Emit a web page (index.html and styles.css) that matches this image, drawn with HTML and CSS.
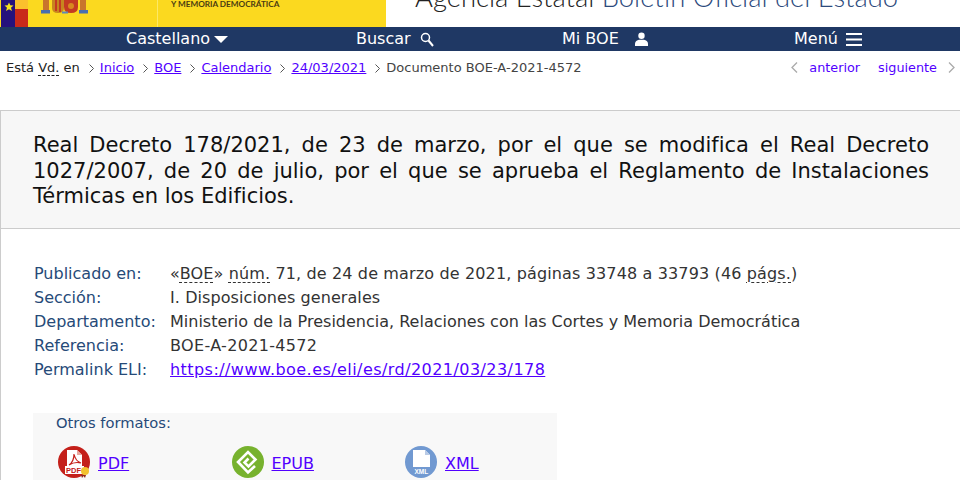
FILE: index.html
```html
<!DOCTYPE html>
<html lang="es">
<head>
<meta charset="utf-8">
<title>BOE-A-2021-4572</title>
<link rel="stylesheet" href="styles.css">
</head>
<body>
<header class="top">
  <div class="logo">
    <svg class="flag" width="90" height="27" viewBox="0 0 90 27">
      <rect x="1" width="14" height="27" fill="#26127c"/>
      <rect x="15" width="13" height="9" fill="#fbc02d"/>
      <rect x="15" y="9" width="13" height="18" fill="#c92a1a"/>
      <polygon points="9,2.500 10.300,5.300 13.500,5.500 11,7.700 12,11 9,9.200 6,11 7,7.700 4.500,5.500 7.700,5.300" fill="#f7e11e"/>
      <rect x="43" width="6" height="10" fill="#c9752c"/>
      <rect x="41" y="10" width="9" height="3.500" fill="#4a6fb0"/>
      <path d="M52 0h12v8q0 5-6 5t-6-5z" fill="#c7861f"/>
      <path d="M55 0h2v11h-2zM59 0h2v12h-2z" fill="#c43a22"/>
      <path d="M64 0h14v7q0 6-7 6t-7-6z" fill="#c43a22"/>
      <circle cx="71" cy="6" r="3" fill="#d8891f"/>
      <rect x="62" y="11.500" width="6" height="2" fill="#5f86b8"/>
      <rect x="80" width="6" height="10" fill="#c9752c"/>
      <rect x="79" y="10" width="9" height="3.500" fill="#4a6fb0"/>
    </svg>
    <span class="ministry">Y MEMORIA DEMOCRÁTICA</span>
  </div>
  <div class="agency">Agencia Estatal <span class="boe-name">Boletín Oficial del Estado</span></div>
</header>
<nav class="mainnav">
  <a class="nav-item nav-lang">Castellano <svg width="14" height="7" viewBox="0 0 14 7"><polygon points="0,0 14,0 7,7" fill="#fff"/></svg></a>
  <a class="nav-item nav-search">Buscar <svg width="14" height="15" viewBox="0 0 14 15"><circle cx="5.500" cy="5.500" r="4" fill="none" stroke="#fff" stroke-width="1.500"/><line x1="8.500" y1="8.500" x2="13" y2="14" stroke="#fff" stroke-width="2"/></svg></a>
  <a class="nav-item nav-mi">Mi BOE <svg width="13" height="14" viewBox="0 0 13 14"><circle cx="6.500" cy="3.700" r="3.200" fill="#fff"/><path d="M0 14v-2.500c0-2 2-3.500 4-3.800h5c2 .3 4 1.800 4 3.800V14z" fill="#fff"/></svg></a>
  <a class="nav-item nav-menu">Menú <svg width="16" height="13" viewBox="0 0 16 13"><rect width="16" height="2" fill="#fff"/><rect y="5.500" width="16" height="2" fill="#fff"/><rect y="11" width="16" height="2" fill="#fff"/></svg></a>
</nav>
<div class="crumbs">
  <div class="trail">
    <span class="here">Está <abbr>Vd.</abbr> en</span>
    <svg class="sep" width="5" height="9" viewBox="0 0 5 9"><polyline points="0.500,0.500 4.500,4.500 0.500,8.500" fill="none" stroke="#555" stroke-width="1"/></svg><a href="#">Inicio</a>
    <svg class="sep" width="5" height="9" viewBox="0 0 5 9"><polyline points="0.500,0.500 4.500,4.500 0.500,8.500" fill="none" stroke="#555" stroke-width="1"/></svg><a href="#">BOE</a>
    <svg class="sep" width="5" height="9" viewBox="0 0 5 9"><polyline points="0.500,0.500 4.500,4.500 0.500,8.500" fill="none" stroke="#555" stroke-width="1"/></svg><a href="#">Calendario</a>
    <svg class="sep" width="5" height="9" viewBox="0 0 5 9"><polyline points="0.500,0.500 4.500,4.500 0.500,8.500" fill="none" stroke="#555" stroke-width="1"/></svg><a href="#">24/03/2021</a>
    <svg class="sep" width="5" height="9" viewBox="0 0 5 9"><polyline points="0.500,0.500 4.500,4.500 0.500,8.500" fill="none" stroke="#555" stroke-width="1"/></svg><span class="doc">Documento BOE-A-2021-4572</span>
  </div>
  <div class="pager">
    <svg class="chev" width="7" height="11" viewBox="0 0 7 11"><polyline points="6,0.500 1,5.500 6,10.500" fill="none" stroke="#aaa" stroke-width="1.300"/></svg>
    <a class="plain prev">anterior</a>
    <a class="plain next">siguiente</a>
    <svg class="chev" width="7" height="11" viewBox="0 0 7 11"><polyline points="1,0.500 6,5.500 1,10.500" fill="none" stroke="#aaa" stroke-width="1.300"/></svg>
  </div>
</div>
<main class="doc-box">
  <h2 class="doc-title">Real Decreto 178/2021, de 23 de marzo, por el que se modifica el Real Decreto 1027/2007, de 20 de julio, por el que se aprueba el Reglamento de Instalaciones Térmicas en los Edificios.</h2>
  <dl class="meta">
    <dt>Publicado en:</dt><dd class="wide-1">«<abbr>BOE</abbr>» <abbr>núm.</abbr> 71, de 24 de marzo de 2021, páginas 33748 a 33793 (46 <abbr>págs.</abbr>)</dd>
    <dt>Sección:</dt><dd class="wide-2">I. Disposiciones generales</dd>
    <dt>Departamento:</dt><dd>Ministerio de la Presidencia, Relaciones con las Cortes y Memoria Democrática</dd>
    <dt>Referencia:</dt><dd class="wide-3">BOE-A-2021-4572</dd>
    <dt>Permalink ELI:</dt><dd class="wide-4"><a href="#">https://www.boe.es/eli/es/rd/2021/03/23/178</a></dd>
  </dl>
  <section class="formats">
    <p class="formats-label">Otros formatos:</p>
    <ul class="format-list">
      <li>
        <svg class="fmt-icon" width="32" height="32" viewBox="0 0 32 32"><circle cx="16" cy="16" r="16" fill="#c4201a"/><path d="M9 4h10l5 5v13H9z" fill="#fff"/><path d="M19 4l5 5h-5z" fill="#e8a8a0"/><path d="M16 8c0 5-2 9-5 11 3-2 8-3 12-2-3-1-6-4-7-9z" fill="none" stroke="#c4201a" stroke-width="1.200"/><rect x="7" y="20" width="19" height="8" fill="#fff"/><text x="8" y="27" class="pdf-mark">PDF</text><circle cx="27" cy="25" r="4" fill="#f2c12e"/><path d="M23 29l1 3 1.500-2 1.500 2 1-3z" fill="#8a2a1a"/></svg>
        <a href="#">PDF</a>
      </li>
      <li>
        <svg class="fmt-icon" width="32" height="32" viewBox="0 0 32 32"><circle cx="16" cy="16" r="16" fill="#77b22e"/><path d="M23 20L16 26.500 6 16 16 6l7.500 7.500-7 7-4-4 4-4" fill="none" stroke="#fff" stroke-width="2.600"/></svg>
        <a href="#">EPUB</a>
      </li>
      <li>
        <svg class="fmt-icon" width="32" height="32" viewBox="0 0 32 32"><circle cx="16" cy="16" r="16" fill="#7199d1"/><path d="M8 4h12l5 5v20H8z" fill="#fff"/><path d="M20 4l5 5h-5z" fill="#b9cbe6"/><rect x="8" y="21" width="17" height="8" fill="#7199d1"/><text x="9.500" y="27.500" class="xml-mark">XML</text></svg>
        <a href="#">XML</a>
      </li>
    </ul>
  </section>
</main>
</body>
</html>
```
FILE: styles.css
```css
* { box-sizing: border-box; }
html, body { margin: 0; padding: 0; }
body { width: 960px; height: 480px; overflow: hidden; background: #fff; font-family: "DejaVu Sans", Verdana, sans-serif; font-size: 13px; color: #222; }
a { color: #5200ff; }
abbr { text-decoration: underline dashed 1px; text-underline-offset: 3px; }

.top { height: 27px; display: flex; overflow: hidden; }
.logo { flex: none; width: 386px; height: 27px; background: #fbd91f; display: flex; position: relative; }
.flag { flex: none; }
.ministry { position: absolute; left: 171px; top: -1px; font-family: "Lato", sans-serif; font-weight: 700; font-size: 8.2px; line-height: 11px; color: #4a3b12; white-space: nowrap; }
.logo::after { content: ""; position: absolute; left: 157px; top: 0; bottom: 0; width: 1px; background: #fce866; }
.agency { margin: -21px 0 0 29px; font-family: "Lato", sans-serif; font-weight: 300; font-size: 27.4px; line-height: 36px; height: 48px; white-space: nowrap; color: #222; }
.boe-name { color: #2c4a7c; }

.mainnav { height: 24px; background: #1f3864; display: flex; color: #fff; font-size: 16px; line-height: 24px; }
.nav-item { display: flex; align-items: center; color: #fff; flex: none; }
.nav-lang { width: 356px; padding-left: 126px; gap: 4px; }
.nav-search { width: 206px; gap: 9px; }
.nav-mi { width: 232px; gap: 16px; }
.nav-menu { gap: 8px; }

.crumbs { display: flex; justify-content: space-between; padding: 9px 5px 0 6px; height: 59px; font-size: 13px; line-height: 16px; }
.trail { display: flex; align-items: flex-start; }
.sep { flex: none; margin: 4px 6px 0 9px; }
.doc { color: #444; }
.pager { display: flex; align-items: flex-start; padding-top: 1px; font-size: 12.8px; }
.pager .plain { color: #5200ff; line-height: 13px; text-decoration: none; }
.pager .chev { margin-top: 1px; }
.prev { margin-left: 11px; }
.next { margin: 0 11px 0 18px; }

.doc-box { border: 1px solid #ccc; border-right: 0; border-bottom: 0; height: 370px; overflow: hidden; }
.doc-title { margin: 0; height: 118px; padding: 22px 31px 0 32px; background: #f7f7f7; border-bottom: 1px solid #ccc; font-size: 21px; font-weight: 400; line-height: 25.6px; text-align: justify; color: #111; }
.meta { margin: 0; padding: 33px 0 0 33px; display: grid; grid-template-columns: 136px 1fr; font-size: 16px; line-height: 24px; white-space: nowrap; }
.meta dt { color: #264a78; }
.meta dd { margin: 0; color: #333; }
.wide-1 { letter-spacing: 0.14px; }
.wide-2 { letter-spacing: 0.08px; }
.wide-3 { letter-spacing: 0.33px; }
.wide-4 { letter-spacing: 0.44px; }
.formats { margin: 31px 0 0 32px; width: 524px; height: 67px; background: #f8f8f8; padding: 0 0 0 23px; }
.formats-label { margin: 0; font-size: 14.7px; line-height: 20px; color: #264a78; }
.format-list { list-style: none; margin: 13px 0 0; padding: 0 0 0 2px; display: flex; }
.format-list li { flex: none; width: 173.500px; display: flex; align-items: center; gap: 8px; font-size: 16px; }
.format-list a { margin-top: 2px; }
.fmt-icon { flex: none; overflow: visible; }
.pdf-mark { font: 700 7.500px "Liberation Sans", sans-serif; fill: #c4201a; }
.xml-mark { font: 700 6.500px "Liberation Sans", sans-serif; fill: #fff; }
```
